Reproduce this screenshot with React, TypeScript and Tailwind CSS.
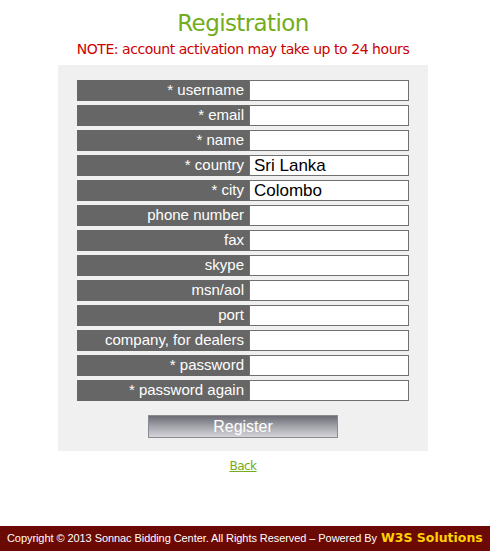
const fields: { label: string; value?: string }[] = [
  { label: "* username" },
  { label: "* email" },
  { label: "* name" },
  { label: "* country", value: "Sri Lanka" },
  { label: "* city", value: "Colombo" },
  { label: "phone number" },
  { label: "fax" },
  { label: "skype" },
  { label: "msn/aol" },
  { label: "port" },
  { label: "company, for dealers" },
  { label: "* password" },
  { label: "* password again" },
];

export default function App() {
  return (
    <div className="min-h-[551px] flex flex-col bg-white font-['Liberation_Sans',Arial,sans-serif]">
      <main className="flex-1 w-[486px] flex flex-col items-center">
        <h1 className="mt-[9px] text-[23px] leading-[28px] text-[#73ac1c] font-['DejaVu_Sans',Tahoma,sans-serif] tracking-[-0.6px]">
          Registration
        </h1>
        <p className="mt-[3px] text-[14px] leading-[18px] text-[#cc0000] font-['DejaVu_Sans',Tahoma,sans-serif] tracking-[-0.45px]">
          NOTE: account activation may take up to 24 hours
        </p>
        <form className="mt-[7px] w-[370px] bg-[#f0f0f0] pt-[15px] pb-[13px] px-[19px] flex flex-col items-center">
          <div className="flex flex-col gap-[4px] w-full">
            {fields.map((f) => (
              <div key={f.label} className="flex h-[21px]">
                <label className="w-[172px] bg-[#666666] text-white text-[15px] leading-[20px] text-right pr-[5px]">
                  {f.label}
                </label>
                <input
                  defaultValue={f.value}
                  className="w-[160px] h-[21px] bg-white border border-[#707070] px-[4px] text-[17px] leading-[19px] text-black outline-none"
                />
              </div>
            ))}
          </div>
          <button
            type="button"
            className="mt-[14px] w-[190px] h-[23px] border border-[#8a8a90] bg-gradient-to-b from-[#6c6c74] via-[#a4a4ac] to-[#d4d4da] text-white text-[16px] leading-[21px]"
          >
            Register
          </button>
        </form>
        <a href="#" className="mt-[7px] text-[12px] leading-[16px] text-[#73ac1c] underline font-['DejaVu_Sans',Tahoma,sans-serif] tracking-[-0.5px]">
          Back
        </a>
      </main>
      <footer className="h-[25px] bg-[#6b0a05] flex items-center pl-[7px] text-white text-[11px] whitespace-nowrap">
        <span className="tracking-[-0.07px]">
          Copyright © 2013 Sonnac Bidding Center. All Rights Reserved – Powered By
        </span>
        <span className="ml-[4px] text-[#ffd200] font-bold text-[12.5px] font-['DejaVu_Sans',Verdana,sans-serif]">
          W3S Solutions
        </span>
      </footer>
    </div>
  );
}
